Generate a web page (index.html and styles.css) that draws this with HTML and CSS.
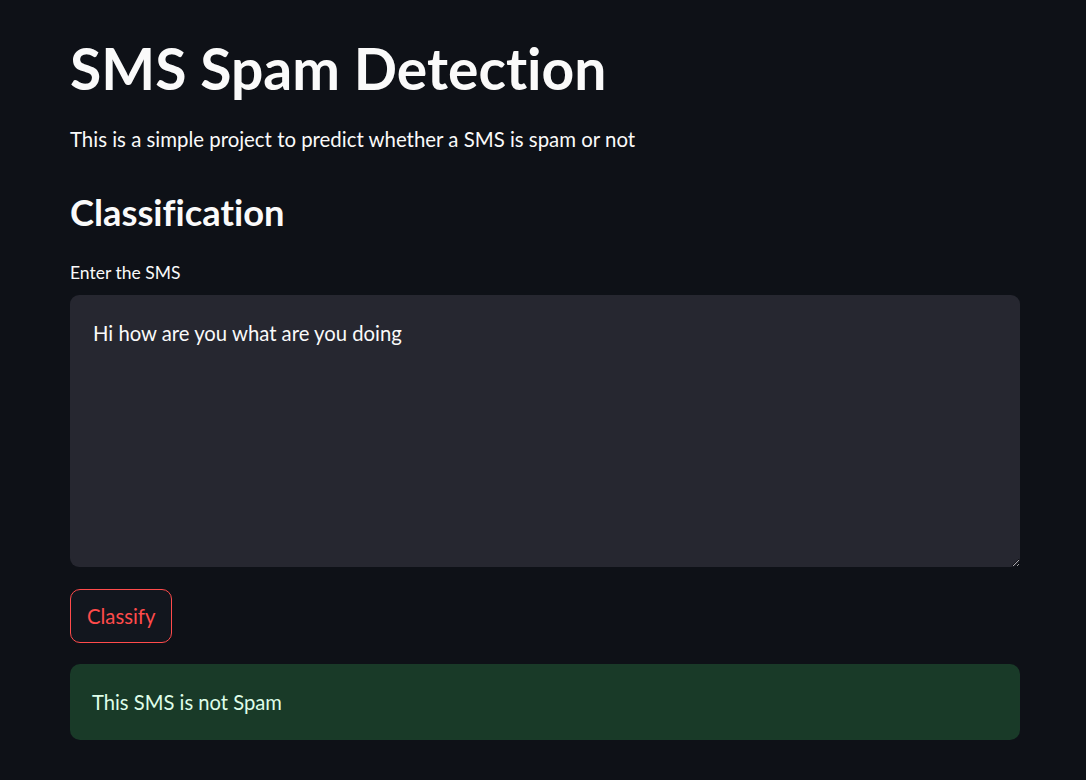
FILE: index.html
```html
<!DOCTYPE html>
<html>
<head>
<meta charset="utf-8">
<link rel="stylesheet" href="styles.css">
</head>
<body>
<main class="app">
  <h1 class="title">SMS Spam Detection</h1>
  <p class="intro">This is a simple project to predict whether a SMS is spam or not</p>
  <h2 class="subtitle">Classification</h2>
  <label class="field-label" for="sms">Enter the SMS</label>
  <textarea id="sms" class="sms-input">Hi how are you what are you doing</textarea>
  <button class="btn">Classify</button>
  <div class="alert-success">This SMS is not Spam</div>
</main>
</body>
</html>
```
FILE: styles.css
```css
html, body {
  margin: 0;
  padding: 0;
  background: #0e1117;
  color: #fafafa;
  font-family: "Lato", "Noto Sans", sans-serif;
  font-variant-ligatures: none;
}
.app {
  width: 950px;
  margin-left: 70px;
  display: flex;
  flex-direction: column;
  align-items: flex-start;
}
.title {
  margin: 0;
  padding-top: 30px;
  font-size: 57px;
  line-height: 76px;
  font-weight: 700;
}
.intro {
  margin: 17px 0 0;
  font-size: 20.4px;
  line-height: 32px;
}
.subtitle {
  margin: 31px 0 0;
  font-size: 36.3px;
  line-height: 52px;
  font-weight: 700;
}
.field-label {
  margin-top: 23px;
  font-size: 17.5px;
  line-height: 24px;
}
.sms-input {
  box-sizing: border-box;
  margin-top: 10px;
  width: 950px;
  height: 272px;
  background: #262730;
  color: #fafafa;
  border: 0;
  border-radius: 9px;
  padding: 22px 23px;
  font-family: inherit;
  font-variant-ligatures: none;
  font-size: 20.3px;
  line-height: 32px;
  resize: vertical;
  outline: none;
}
.btn {
  margin-top: 22px;
  height: 54px;
  padding: 0 16px;
  background: #12161e;
  color: #ff4b4b;
  border: 1px solid #ff4b4b;
  border-radius: 10px;
  font-family: inherit;
  font-size: 20.3px;
}
.alert-success {
  box-sizing: border-box;
  margin-top: 21px;
  width: 950px;
  height: 76px;
  padding: 0 22px;
  display: flex;
  align-items: center;
  background: #193a28;
  color: #dffde9;
  border-radius: 10px;
  font-size: 20.2px;
}
```
